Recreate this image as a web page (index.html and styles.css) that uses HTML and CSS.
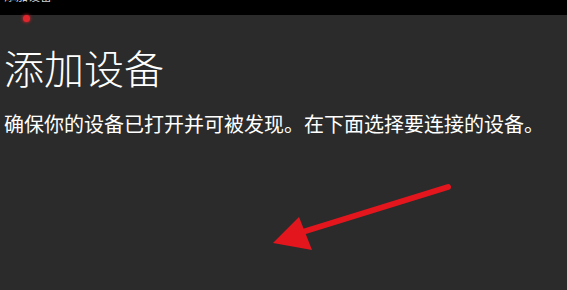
FILE: index.html
```html
<!DOCTYPE html>
<html lang="zh-CN">
<head>
<meta charset="utf-8">
<link rel="stylesheet" href="styles.css">
</head>
<body>
<div class="titlebar"><span class="titlebar-text">添加设备</span></div>
<span class="red-dot"></span>
<main class="content">
  <h1 class="title">添加设备</h1>
  <p class="desc">确保你的设备已打开并可被发现。在下面选择要连接的设备。</p>
</main>
<svg class="arrow" width="567" height="290" viewBox="0 0 567 290">
  <line x1="448" y1="187" x2="296" y2="234" stroke="#e3161e" stroke-width="6" stroke-linecap="round"/>
  <polygon points="273,243 299,217 312,250" fill="#e3161e"/>
</svg>
</body>
</html>
```

FILE: styles.css
```css
html, body {
  margin: 0;
  padding: 0;
}
body {
  width: 567px;
  height: 290px;
  background: #2b2b2b;
  overflow: hidden;
  position: relative;
  font-family: "Noto Sans CJK SC", "Noto Sans", sans-serif;
  color: #ffffff;
}
.titlebar {
  height: 15px;
  background: #000000;
  overflow: hidden;
  padding-left: 4px;
}
.titlebar-text {
  display: block;
  font-size: 12px;
  line-height: 12px;
  margin-top: -10px;
  color: #cfcfcf;
}
.red-dot {
  position: absolute;
  left: 23px;
  top: 15px;
  width: 7px;
  height: 7px;
  border-radius: 50%;
  background: #e0262d;
  box-shadow: 0 0 3px 1px rgba(217, 35, 42, 0.6);
}
.content {
  padding: 0 0 0 4px;
}
.title {
  margin: 32px 0 0 0;
  font-size: 40px;
  line-height: 40px;
  font-weight: 300;
}
.desc {
  margin: 27px 0 0 0;
  font-size: 20px;
  line-height: 20px;
  font-weight: 400;
}
.arrow {
  position: absolute;
  left: 0;
  top: 0;
}
```
